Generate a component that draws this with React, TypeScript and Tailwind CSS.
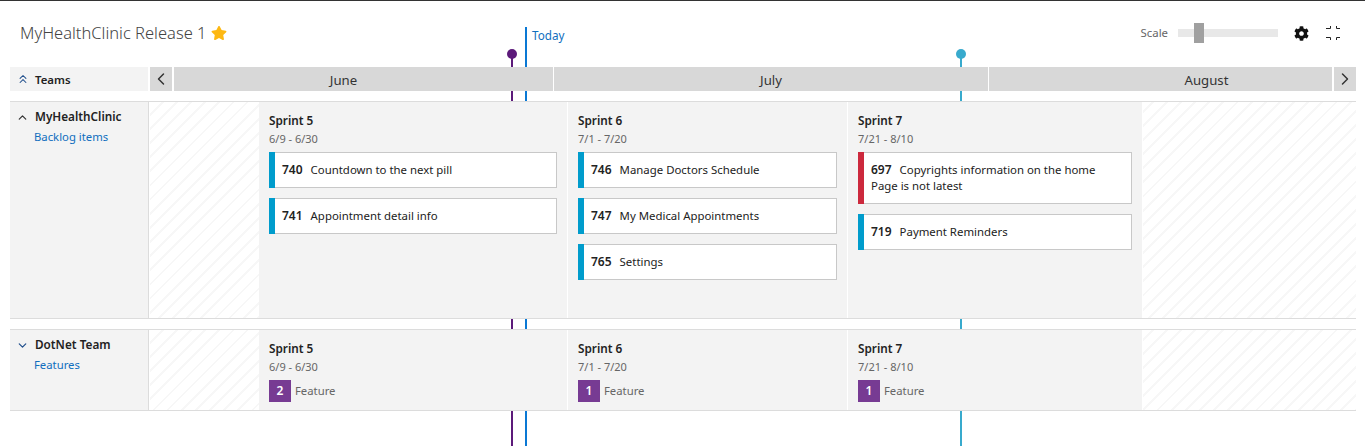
import { ChevronLeft, ChevronRight, ChevronUp, ChevronDown, ChevronsUp } from "lucide-react";
import { FaCog, FaStar } from "react-icons/fa";

const hatch = "bg-[repeating-linear-gradient(135deg,#ffffff_0px,#ffffff_8px,#f7f7f7_8px,#f7f7f7_10px)]";

function Card({ id, title, accent = "bg-[#009ccc]" }: { id: number; title: string; accent?: string }) {
  return (
    <div className="flex bg-white">
      <div className={`w-[6px] shrink-0 ${accent}`} />
      <div className="flex-1 border border-l-0 border-[#c8c8c8] pl-[7px] pr-[20px] py-[9px] text-[11.4px] leading-[16px] text-[#222222]">
        <span className="mr-[8px] text-[12px] font-semibold">{id}</span>
        {title}
      </div>
    </div>
  );
}

function Sprint({ name, dates, width, children }: { name: string; dates: string; width: string; children: React.ReactNode }) {
  return (
    <div className={`${width} shrink-0 border-r border-white bg-[#f3f3f3] pl-[10px] pr-[10px] pt-[10px]`}>
      <div className="text-[11.75px] font-semibold leading-[17px] text-[#222222]">{name}</div>
      <div className="mt-[2px] text-[11px] leading-[16px] text-[#666666]">{dates}</div>
      <div className="mt-[5px] flex flex-col gap-[10px]">{children}</div>
    </div>
  );
}

function Feature({ n }: { n: number }) {
  return (
    <div className="flex items-center gap-[4px]">
      <div className="flex h-[22px] w-[22px] items-center justify-center bg-[#773b93] text-[12px] font-semibold text-white">{n}</div>
      <span className="text-[11.3px] text-[#666666]">Feature</span>
    </div>
  );
}

function Row({ name, link, open, height, children }: { name: string; link: string; open: boolean; height: string; children: React.ReactNode }) {
  return (
    <div className={`relative z-10 ml-[10px] flex w-[1346px] ${height} border-y border-[#dcdcdc]`}>
      <div className="flex w-[139px] shrink-0 border-r border-[#dcdcdc] bg-[#f3f3f3] pt-[6px]">
        <div className="flex w-[25px] justify-center pt-[3px]">
          {open ? <ChevronUp size={13} strokeWidth={2.25} className="text-[#333333]" /> : <ChevronDown size={13} strokeWidth={2.25} className="text-[#1f4e8c]" />}
        </div>
        <div>
          <div className="text-[11.75px] font-semibold leading-[17px] text-[#222222]">{name}</div>
          <div className="-ml-px mt-[4px] text-[11.3px] leading-[16px] text-[#106ebe]">{link}</div>
        </div>
      </div>
      <div className={`ml-[1px] flex flex-1 ${hatch}`}>
        <div className="w-[109px] shrink-0" />
        {children}
      </div>
    </div>
  );
}

export default function App() {
  return (
    <div className="relative h-[446px] w-[1365px] overflow-hidden border-t border-[#333333] bg-white font-['Noto_Sans',sans-serif]">
      {/* plan markers */}
      <div className="absolute left-[511px] top-[57px] bottom-0 w-[2px] bg-[#5c1a7a]" />
      <div className="absolute left-[507px] top-[48px] h-[10px] w-[10px] rounded-full bg-[#5c1a7a]" />
      <div className="absolute left-[525px] top-[26px] bottom-0 w-[2px] bg-[#0a78d4]" />
      <div className="absolute left-[532px] top-[26px] text-[11.7px] leading-[16px] text-[#106ebe]">Today</div>
      <div className="absolute left-[960px] top-[57px] bottom-0 w-[2px] bg-[#38aacd]" />
      <div className="absolute left-[956px] top-[48px] h-[10px] w-[10px] rounded-full bg-[#38aacd]" />

      <div className="flex h-[66px] items-start pl-[20px] pr-[24px]">
        <div className="mt-[20px] flex items-center gap-[5px]">
          <span className="text-[16.5px] font-light leading-[24px] text-[#444444]">MyHealthClinic Release 1</span>
          <FaStar size={16} className="text-[#fdb813]" />
        </div>
        <div className="ml-auto mt-[22px] flex items-center">
          <span className="text-[11.4px] leading-[20px] text-[#666666]">Scale</span>
          <div className="relative ml-[10px] mr-[16px] h-[8px] w-[100px] bg-[#e8e8e8]">
            <div className="absolute left-[16px] top-[-6px] h-[20px] w-[10px] bg-[#a0a0a0]" />
          </div>
          <FaCog size={15} className="text-[#111111]" />
          <svg width="16" height="16" viewBox="0 0 16 16" className="ml-[16px]" fill="none" stroke="#222222" strokeWidth="1">
            <path d="M1 3.500H5.500V1M15 3.500H11.500V1M1 12.500H5.500V15M15 12.500H11.500V15" />
          </svg>
        </div>
      </div>

      <div className="relative z-10 ml-[10px] flex h-[24px] w-[1346px] text-[#333333]">
        <div className="flex w-[138px] items-center bg-[#f3f3f3]">
          <ChevronsUp size={14} strokeWidth={1.75} className="ml-[6px] text-[#1f4e8c]" />
          <span className="ml-[5px] pt-[1px] text-[11.4px] font-semibold text-[#222222]">Teams</span>
        </div>
        <div className="ml-[2px] flex w-[22px] items-center justify-center bg-[#d8d8d8]"><ChevronLeft size={20} strokeWidth={1.75} /></div>
        <div className="ml-[2px] flex w-[379px] items-center justify-center bg-[#d8d8d8] pr-[40px] pt-[3px] text-[13.2px]">June</div>
        <div className="ml-px flex w-[434px] items-center justify-center bg-[#d8d8d8] pt-[3px] text-[13.2px]">July</div>
        <div className="ml-px flex w-[343px] items-center justify-center bg-[#d8d8d8] pl-[92px] pt-[3px] text-[13.2px]">August</div>
        <div className="ml-[2px] flex w-[22px] items-center justify-center bg-[#d8d8d8]"><ChevronRight size={20} strokeWidth={1.75} /></div>
      </div>

      <div className="h-[10px]" />

      <Row name="MyHealthClinic" link="Backlog items" open height="h-[218px]">
        <Sprint name="Sprint 5" dates="6/9 - 6/30" width="w-[309px]">
          <Card id={740} title="Countdown to the next pill" />
          <Card id={741} title="Appointment detail info" />
        </Sprint>
        <Sprint name="Sprint 6" dates="7/1 - 7/20" width="w-[280px]">
          <Card id={746} title="Manage Doctors Schedule" />
          <Card id={747} title="My Medical Appointments" />
          <Card id={765} title="Settings" />
        </Sprint>
        <Sprint name="Sprint 7" dates="7/21 - 8/10" width="w-[295px]">
          <Card id={697} title="Copyrights information on the home Page is not latest" accent="bg-[#cc293d]" />
          <Card id={719} title="Payment Reminders" />
        </Sprint>
      </Row>

      <div className="h-[10px]" />

      <Row name="DotNet Team" link="Features" open={false} height="h-[82px]">
        <Sprint name="Sprint 5" dates="6/9 - 6/30" width="w-[309px]"><Feature n={2} /></Sprint>
        <Sprint name="Sprint 6" dates="7/1 - 7/20" width="w-[280px]"><Feature n={1} /></Sprint>
        <Sprint name="Sprint 7" dates="7/21 - 8/10" width="w-[295px]"><Feature n={1} /></Sprint>
      </Row>
    </div>
  );
}
